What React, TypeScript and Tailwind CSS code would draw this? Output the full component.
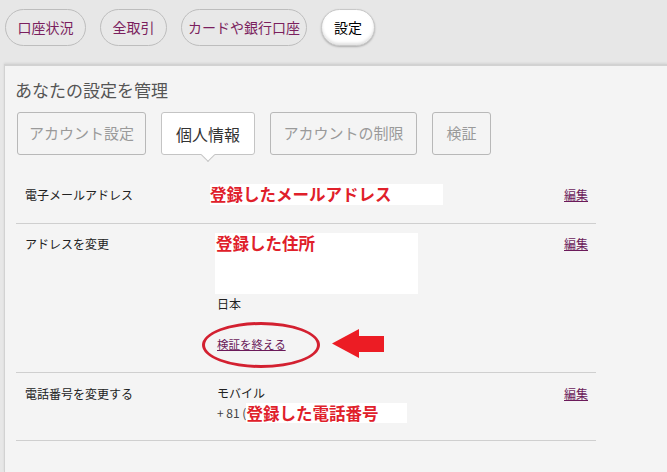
const jp = { fontFamily: '"Noto Sans CJK JP", "Noto Sans", sans-serif' };

function Pill({ label, active, w }: { label: string; active?: boolean; w: string }) {
  return (
    <div
      className={
        "h-[37px] rounded-full flex items-center justify-center text-[14px] " +
        w +
        (active
          ? " bg-white text-black border border-[#c8c8c8] shadow-[inset_0_-2px_3px_rgba(0,0,0,0.12),0_1px_2px_rgba(0,0,0,0.25)]"
          : " bg-[#e8e8e8] text-[#7b1f5e] border border-[#bdbdbd]")
      }
    >
      {label}
    </div>
  );
}

function Tab({ label, active, w }: { label: string; active?: boolean; w: string }) {
  return (
    <div
      className={
        "relative h-[43px] rounded-[3px] border flex items-center justify-center " +
        w +
        (active
          ? " bg-white border-[#c4c4c4] text-[#333] text-[16px]"
          : " bg-[#f4f4f4] border-[#b8b8b8] text-[#9a9a9a] text-[15px]")
      }
    >
      {label}
      {active && (
        <div className="absolute left-1/2 -bottom-[6px] w-[10px] h-[10px] -ml-[5px] bg-white border-r border-b border-[#c4c4c4] rotate-45" />
      )}
    </div>
  );
}

export default function App() {
  return (
    <div className="w-[667px] h-[472px] overflow-hidden bg-[#e7e7e7] flex flex-col" style={jp}>
      <div className="flex pt-[9px] pl-[5px] gap-[14px]">
        <Pill label="口座状況" w="w-[81px]" />
        <Pill label="全取引" w="w-[67px]" />
        <Pill label="カードや銀行口座" w="w-[126px]" />
        <Pill label="設定" w="w-[54px]" active />
      </div>

      <div className="mt-[18px] ml-[4px] flex-1 bg-[#f4f4f4] border-t-2 border-l border-[#d2d2d2] shadow-[0_-1px_2px_rgba(0,0,0,0.08)]">
        <div className="pl-[10px] pt-[12px] text-[17px] text-[#555] leading-[24px]">あなたの設定を管理</div>

        <div className="flex gap-[15px] pl-[12px] mt-[10px]">
          <Tab label="アカウント設定" w="w-[129px]" />
          <Tab label="個人情報" w="w-[94px]" active />
          <Tab label="アカウントの制限" w="w-[147px]" />
          <Tab label="検証" w="w-[59px]" />
        </div>

        <div className="ml-[11px] w-[580px] mt-[9px] text-[12px] text-[#222]">
          {/* email */}
          <div className="h-[60px] border-b border-[#cfcfcf] flex pt-[20px]">
            <div className="w-[194px] pl-[9px] pt-[2px]">電子メールアドレス</div>
            <div className="w-[354px]">
              <div className="w-[233px] h-[21px] bg-white text-[#e0202a] font-bold text-[16.5px] leading-[21px]">
                登録したメールアドレス
              </div>
            </div>
            <div className="pt-[2px] text-[#6b1a5a] underline">編集</div>
          </div>

          {/* address */}
          <div className="h-[149px] border-b border-[#cfcfcf] flex pt-[9px]">
            <div className="w-[199px] pl-[9px] pt-[2px]">アドレスを変更</div>
            <div className="w-[349px] relative">
              <div className="w-[203px] h-[61px] bg-white text-[#e0202a] font-bold text-[16.5px] leading-[20px] pl-[1px]">
                登録した住所
              </div>
              <div className="mt-[2px] leading-[16px] pl-[2px]">日本</div>
              <div className="mt-[24px] pl-[2px] leading-[16px] text-[#6b1a5a] underline text-[11.5px]">検証を終える</div>
              <div className="absolute left-[-13px] top-[89px] w-[118px] h-[46px] rounded-[50%] border-[3px] border-[#d32030]" />
              <svg className="absolute left-[117px] top-[96px]" width="53" height="30" viewBox="0 0 53 30">
                <polygon points="0,14.5 27,0 27,7 52,7 52,23 27,23 27,29" fill="#ec1c24" />
              </svg>
            </div>
            <div className="pt-[2px] text-[#6b1a5a] underline">編集</div>
          </div>

          {/* phone */}
          <div className="h-[68px] border-b border-[#cfcfcf] flex pt-[12px]">
            <div className="w-[199px] pl-[9px]">電話番号を変更する</div>
            <div className="w-[349px] pl-[2px]">
              <div className="leading-[16px]">モバイル</div>
              <div className="flex items-center mt-[2px]">
                <span className="text-[#444]">+ 81 (</span>
                <span className="w-[161px] h-[20px] bg-white text-[#e0202a] font-bold text-[16.5px] leading-[20px]">
                  登録した電話番号
                </span>
              </div>
            </div>
            <div className="text-[#6b1a5a] underline">編集</div>
          </div>
        </div>
      </div>
    </div>
  );
}
